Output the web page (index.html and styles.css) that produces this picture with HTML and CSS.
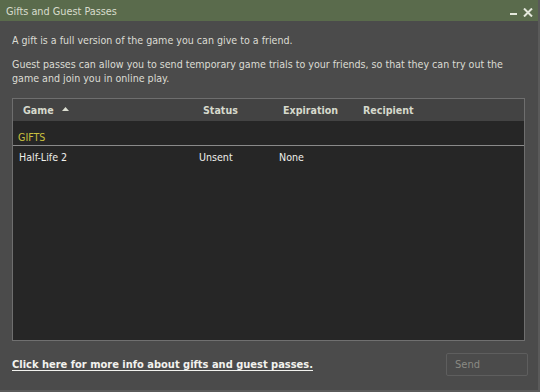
FILE: index.html
```html
<!DOCTYPE html>
<html>
<head>
<meta charset="utf-8">
<link rel="stylesheet" href="styles.css">
</head>
<body>
<div class="window">
  <div class="titlebar">
    <span class="title">Gifts and Guest Passes</span>
    <div class="controls">
      <svg class="min" width="7" height="3" viewBox="0 0 7 3"><rect x="0" y="0" width="7" height="2" fill="#e4e8dc"/></svg>
      <svg class="close" width="10" height="9" viewBox="0 0 10 9"><path d="M1 0.5 L9 8.5 M9 0.5 L1 8.5" stroke="#e4e8dc" stroke-width="2"/></svg>
    </div>
  </div>
  <div class="content">
    <p class="intro">A gift is a full version of the game you can give to a friend.</p>
    <p class="intro second">Guest passes can allow you to send temporary game trials to your friends, so that they can try out the game and join you in online play.</p>
    <div class="panel">
      <div class="header">
        <span class="col c-game">Game <svg class="arrow" width="7" height="4" viewBox="0 0 7 4"><path d="M0 4 L3.5 0 L7 4 Z" fill="#dcdfd2"/></svg></span>
        <span class="col c-status">Status</span>
        <span class="col c-exp">Expiration</span>
        <span class="col c-rec">Recipient</span>
      </div>
      <div class="list">
        <div class="section">GIFTS</div>
        <div class="row">
          <span class="cell c-game">Half-Life 2</span>
          <span class="cell c-status">Unsent</span>
          <span class="cell c-exp">None</span>
        </div>
      </div>
    </div>
    <div class="footer">
      <a class="link" href="#">Click here for more info about gifts and guest passes.</a>
      <button class="send">Send</button>
    </div>
  </div>
</div>
</body>
</html>
```
FILE: styles.css
```css
html, body {
  margin: 0;
  padding: 0;
  background: #4b4b4b;
}
body {
  width: 540px;
  height: 392px;
  overflow: hidden;
  font-family: "DejaVu Sans Condensed", "DejaVu Sans", sans-serif;
  font-size: 10.6px;
  color: #dcdcd4;
}
.window {
  width: 540px;
  height: 392px;
  box-sizing: border-box;
  display: flex;
  flex-direction: column;
  background: #4b4b4b;
  border-right: 2px solid #5a5a5a;
  border-bottom: 2px solid #5a5a5a;
}
.titlebar {
  height: 21px;
  flex: none;
  background: #5a6b4c;
  display: flex;
  align-items: center;
  justify-content: space-between;
  padding: 0 5px 0 6px;
}
.title {
  color: #d8dccc;
  font-size: 10.8px;
  padding-top: 1px;
}
.controls {
  display: flex;
  align-items: flex-end;
  gap: 6px;
  padding-top: 4px;
}
.min { margin-bottom: 1px; }
.content {
  flex: 1;
  display: flex;
  flex-direction: column;
  padding: 12px 12px 0 12px;
}
.intro {
  margin: 0;
  line-height: 14px;
  color: #dcdcd4;
}
.second {
  margin-top: 10px;
}
.panel {
  margin-top: 13px;
  height: 243px;
  width: 513px;
  box-sizing: border-box;
  border: 1px solid #6e6e6e;
  border-bottom-color: #707070;
  display: flex;
  flex-direction: column;
}
.header {
  height: 22px;
  flex: none;
  background: #434343;
  display: flex;
  align-items: center;
  font-weight: bold;
  color: #d6d9cc;
}
.col { display: inline-flex; align-items: center; }
.header .c-game { margin-left: 10px; width: 180px; }
.header .c-status { width: 80px; }
.header .c-exp { width: 80px; }
.arrow { margin-left: 8px; margin-bottom: 2px; }
.list {
  flex: 1;
  background: #262626;
}
.section {
  margin-top: 9px;
  padding-left: 5px;
  color: #c9c03e;
  height: 14px;
  line-height: 14px;
  border-bottom: 1px solid #8a8a8a;
  padding-bottom: 1px;
}
.row {
  display: flex;
  height: 22px;
  align-items: center;
  color: #eeeeea;
}
.row .c-game { padding-left: 6px; width: 180px; }
.row .c-status { width: 80px; }
.row .c-exp { width: 80px; }
.footer {
  display: flex;
  align-items: center;
  justify-content: space-between;
  margin-top: 12px;
}
.link {
  color: #f2f2ee;
  font-weight: bold;
  font-size: 11px;
  text-decoration: underline;
  text-decoration-thickness: 1px;
  text-underline-offset: 2px;
}
.send {
  width: 82px;
  height: 23px;
  margin-right: -2px;
  background: #4b4b4b;
  border: 1px solid #5e5e5e;
  border-radius: 2px;
  color: #8a8a84;
  font-family: inherit;
  font-size: 11px;
  text-align: left;
  padding-left: 8px;
}
```
